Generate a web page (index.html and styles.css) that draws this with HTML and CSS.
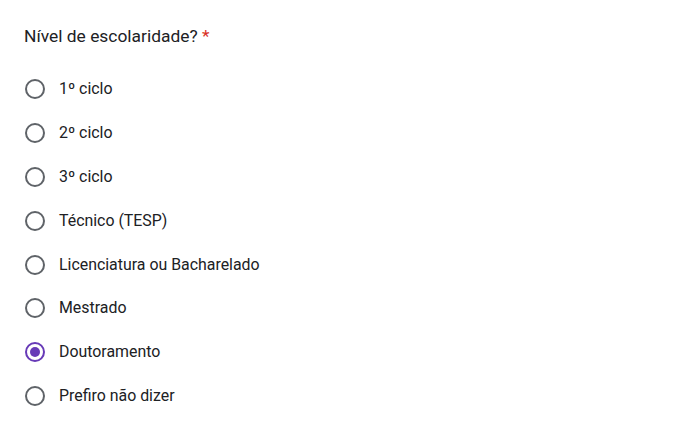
FILE: index.html
```html
<!DOCTYPE html>
<html lang="pt">
<head>
<meta charset="utf-8">
<link rel="stylesheet" href="styles.css">
</head>
<body>
<div class="question">
  <div class="title">Nível de escolaridade? <span class="req">*</span></div>
  <div class="options">
    <label class="opt"><span class="radio"></span><span class="lbl">1º ciclo</span></label>
    <label class="opt"><span class="radio"></span><span class="lbl">2º ciclo</span></label>
    <label class="opt"><span class="radio"></span><span class="lbl">3º ciclo</span></label>
    <label class="opt"><span class="radio"></span><span class="lbl">Técnico (TESP)</span></label>
    <label class="opt"><span class="radio"></span><span class="lbl">Licenciatura ou Bacharelado</span></label>
    <label class="opt"><span class="radio"></span><span class="lbl">Mestrado</span></label>
    <label class="opt"><span class="radio checked"></span><span class="lbl">Doutoramento</span></label>
    <label class="opt"><span class="radio"></span><span class="lbl">Prefiro não dizer</span></label>
  </div>
</div>
</body>
</html>
```
FILE: styles.css
```css
html, body { margin: 0; padding: 0; background: #fff; }
body { font-family: Roboto, "Noto Sans", Arial, sans-serif; color: #202124; }
.question { padding: 24px 24px; }
.title { font-size: 17.4px; line-height: 24px; }
.req { color: #d93025; }
.options { display: flex; flex-direction: column; margin-top: 19.6px; }
.opt { display: flex; align-items: center; height: 43.8px; }
.radio { box-sizing: border-box; flex: none; width: 20px; height: 20px; border: 2px solid #5f6368; border-radius: 50%; margin-left: 1px; margin-right: 14px; display: flex; align-items: center; justify-content: center; }
.radio.checked { border-color: #673ab7; }
.radio.checked::after { content: ""; width: 10px; height: 10px; border-radius: 50%; background: #673ab7; }
.lbl { font-size: 15.9px; line-height: 20px; }
```
